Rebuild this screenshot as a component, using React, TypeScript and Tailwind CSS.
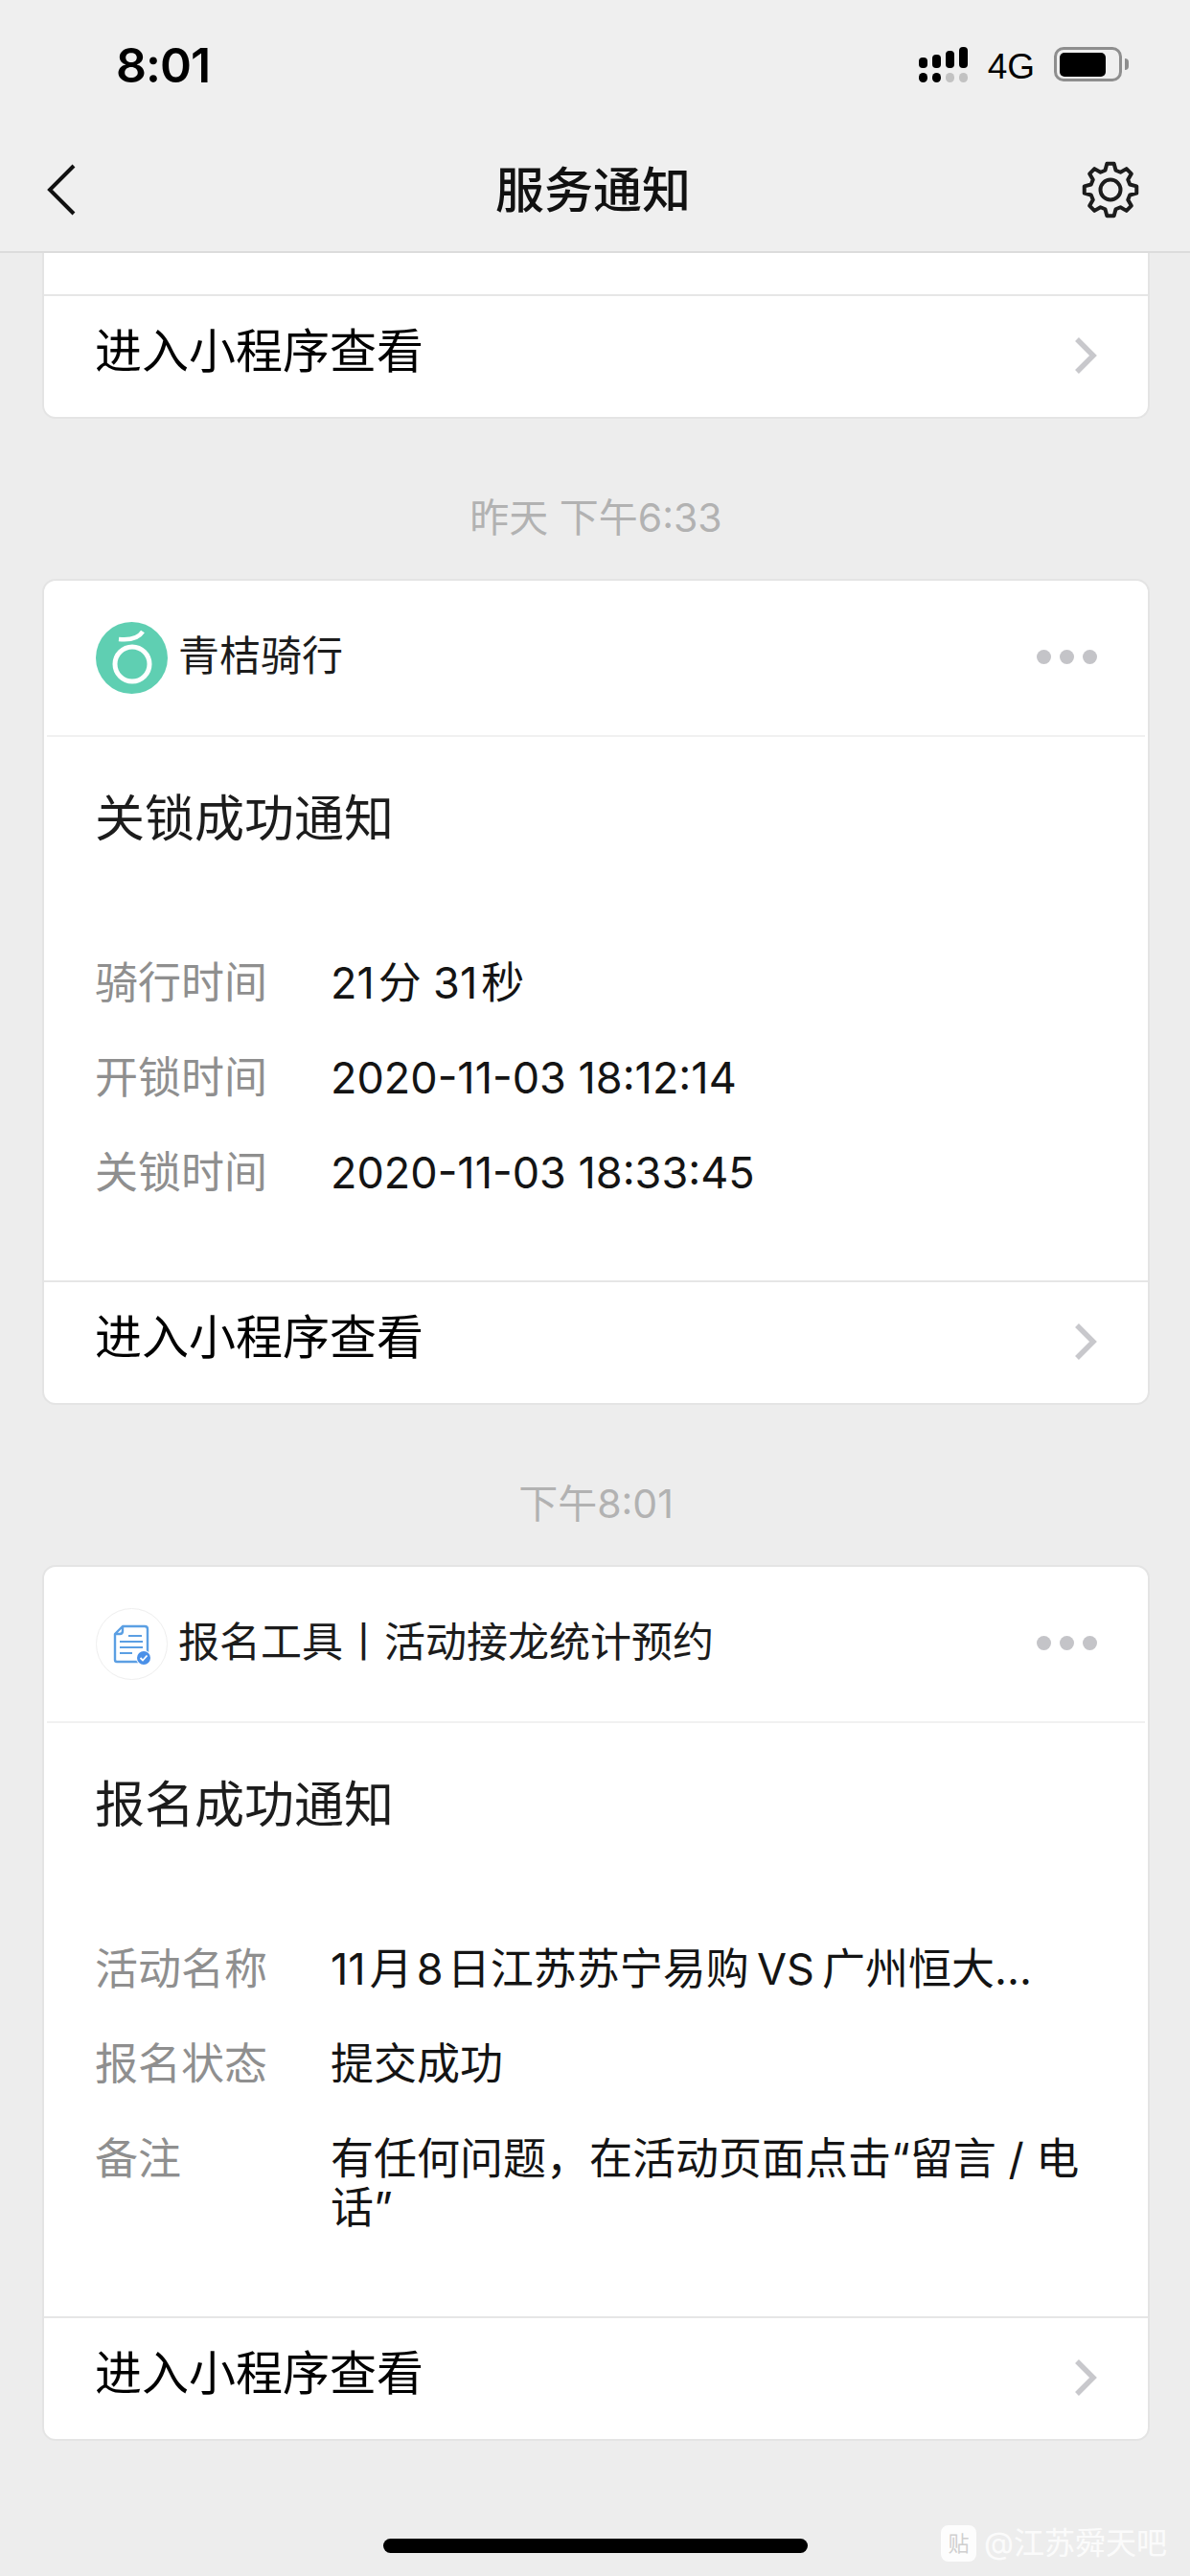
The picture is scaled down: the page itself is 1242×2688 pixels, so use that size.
import React from 'react';

const FONT = "font-['Inter','Noto_Sans_CJK_SC',sans-serif]";

// 8 tooth cog, same outline as the nav bar icon
const gearPath = (() => {
  const cx = 30;
  const cy = 30;
  const teeth = 8;
  const pts: string[] = [];
  for (let i = 0; i < teeth; i++) {
    const a = (i / teeth) * Math.PI * 2 - Math.PI / 2;
    const step = (Math.PI * 2) / teeth;
    const list: [number, number][] = [
      [a - step * 0.34, 21],
      [a - step * 0.17, 27.5],
      [a + step * 0.17, 27.5],
      [a + step * 0.34, 21],
    ];
    list.forEach(([ang, r]) => {
      pts.push(`${(cx + Math.cos(ang) * r).toFixed(2)} ${(cy + Math.sin(ang) * r).toFixed(2)}`);
    });
  }
  return `M${pts.join('L')}Z`;
})();

const GearIcon = () => (
  <svg width="60" height="60" viewBox="0 0 60 60" fill="none" stroke="#1c1c1c" strokeWidth="4" strokeLinejoin="round">
    <path d={gearPath} />
    <circle cx="30" cy="30" r="10.5" />
  </svg>
);

const SignalIcon = () => (
  <div className="flex gap-[5px]">
    {[
      { h: 'h-[11px]', dot: 'bg-black' },
      { h: 'h-[14px]', dot: 'bg-black' },
      { h: 'h-[18px]', dot: 'bg-[#c2c2c2]' },
      { h: 'h-[22px]', dot: 'bg-[#c2c2c2]' },
    ].map((c, i) => (
      <div key={i} className="flex w-[9px] flex-col items-center justify-end gap-[5px] h-[37px]">
        <div className={`w-[9px] rounded-[4px] bg-black ${c.h}`} />
        <div className={`h-[10px] w-[9px] rounded-full ${c.dot}`} />
      </div>
    ))}
  </div>
);

const BatteryIcon = () => (
  <div className="flex items-center gap-[3px]">
    <div className="flex h-[36px] w-[71px] items-center rounded-[10px] border-[3px] border-[#8e8e8e] pl-[3px]">
      <div className="h-[25px] w-[48px] rounded-[5px] bg-black" />
    </div>
    <div className="h-[12px] w-[4px] rounded-r-full bg-[#8e8e8e]" />
  </div>
);

const Chevron = () => (
  <svg width="26" height="38" viewBox="0 0 26 38" fill="none" stroke="#c8c8cc" strokeWidth="5.5">
    <path d="M4 2 L21 19 L4 36" />
  </svg>
);

const QingjuLogo = () => (
  <svg width="75" height="75" viewBox="0 0 75 75" className="shrink-0">
    <circle cx="37.5" cy="37.5" r="37.5" fill="#5fcfb2" />
    <circle cx="38" cy="44" r="18" fill="none" stroke="#fff" strokeWidth="5" />
    <path d="M24 18 C34 19 44 18 49 10" fill="none" stroke="#fff" strokeWidth="4.5" />
  </svg>
);

const FormLogo = () => (
  <svg width="75" height="75" viewBox="0 0 75 75" className="shrink-0">
    <circle cx="37.5" cy="37.5" r="37" fill="#fff" stroke="#eeeeee" />
    <path
      d="M28 19 H51 Q54 19 54 22 V54 Q54 56 52 56 H22 Q20 56 20 54 V27 Z M28 19 V24 Q28 27 25 27 H20"
      fill="none"
      stroke="#5b9fe3"
      strokeWidth="2.4"
      strokeLinejoin="round"
    />
    <path d="M34 29 H48 M25 35 H49 M25 41 H49 M25 47 H38" stroke="#5b9fe3" strokeWidth="2" />
    <circle cx="50" cy="52" r="8" fill="#fff" />
    <circle cx="50" cy="52" r="7" fill="#4a90e8" />
    <path d="M46.5 52 L49 54.5 L53.5 49.5" fill="none" stroke="#fff" strokeWidth="1.8" />
  </svg>
);

const OpenRow = () => (
  <div className="flex h-[128px] items-center justify-between border-t-2 border-[#e6e6e6] pb-[10px] pl-[53px] pr-[52px]">
    <span className="text-[49px] leading-[60px] text-black">进入小程序查看</span>
    <div className="mt-[7px]">
      <Chevron />
    </div>
  </div>
);

const Stamp = ({ text }: { text: string }) => (
  <div className="h-[167px] pt-[81px] text-center text-[41px] leading-[44px] text-[#b2b2b2]">{text}</div>
);

interface Field {
  label: string;
  value: string;
}

const Notice = ({ logo, name, title, fields, pb }: { logo: React.ReactNode; name: string; title: string; fields: Field[]; pb: string }) => (
  <div className="rounded-[14px] border-2 border-[#e4e4e4] bg-white">
    <div className="mx-[3px] flex h-[163px] items-center border-b-2 border-[#f1f1f1] pl-[51px] pr-[50px]">
      {logo}
      <span className="mb-[5px] ml-[11px] text-[43px] leading-[52px] text-[#1c1c1c]">{name}</span>
      <div className="mb-[2px] ml-auto flex gap-[9px]">
        <div className="size-[15px] rounded-full bg-[#c4c4c8]" />
        <div className="size-[15px] rounded-full bg-[#c4c4c8]" />
        <div className="size-[15px] rounded-full bg-[#c4c4c8]" />
      </div>
    </div>
    <div className={`pl-[53px] pr-[64px] pt-[56px] ${pb}`}>
      <div className="text-[52px] leading-[60px] text-[#1c1c1c]">{title}</div>
      <div className="mt-[115px] flex flex-col gap-[48px]">
        {fields.map((f) => (
          <div key={f.label} className="flex text-[45px] leading-[51px]">
            <span className="w-[246px] shrink-0 text-[#8f8f8f]">{f.label}</span>
            <span className="text-[#141414]">{f.value}</span>
          </div>
        ))}
      </div>
    </div>
    <OpenRow />
  </div>
);

export default function App() {
  return (
    <div className={`flex h-[2688px] w-[1242px] flex-col overflow-hidden bg-[#ededed] ${FONT}`}>
      {/* Status + nav bar */}
      <div className="h-[264px] shrink-0 border-b-2 border-[#dcdcdc] bg-[#efefef]">
        <div className="flex h-[135px] items-start pl-[121px] pr-[64px] pt-[37px]">
          <span className="text-[50px] font-semibold leading-[62px] tracking-[-1px] text-black">8:01</span>
          <div className="ml-auto flex items-center pt-[9px]">
            <SignalIcon />
            <span className="ml-[21px] mt-[5px] font-['Liberation_Sans',sans-serif] text-[37px] leading-[37px] text-black">4G</span>
            <div className="ml-[20px]">
              <BatteryIcon />
            </div>
          </div>
        </div>
        <div className="grid h-[127px] grid-cols-[1fr_auto_1fr] items-start pl-[49px] pr-[53px]">
          <svg width="36" height="54" viewBox="0 0 36 54" fill="none" stroke="#111" strokeWidth="4" className="mt-[36px]">
            <path d="M28 2 L3 27 L28 52" />
          </svg>
          <span className="mt-[34px] text-[51px] font-medium leading-[60px] text-[#111]">服务通知</span>
          <div className="mt-[33px] justify-self-end">
            <GearIcon />
          </div>
        </div>
      </div>

      {/* Message list */}
      <div className="flex-1 pl-[44px] pr-[42px]">
        <div className="rounded-b-[14px] border-x-2 border-b-2 border-[#e4e4e4] bg-white pt-[43px]">
          <OpenRow />
        </div>
        <Stamp text="昨天 下午6:33" />
        <Notice
          logo={<QingjuLogo />}
          name="青桔骑行"
          title="关锁成功通知"
          pb="pb-[87px]"
          fields={[
            { label: '骑行时间', value: '21\u200a分\u2009\u200a31\u200a秒' },
            { label: '开锁时间', value: '2020-11-03 18:12:14' },
            { label: '关锁时间', value: '2020-11-03 18:33:45' },
          ]}
        />
        <Stamp text="下午8:01" />
        <Notice
          logo={<FormLogo />}
          name="报名工具丨活动接龙统计预约"
          title="报名成功通知"
          pb="pb-[88px]"
          fields={[
            { label: '活动名称', value: '11\u200a月\u200a8\u200a日江苏苏宁易购\u2009VS\u2009广州恒大...' },
            { label: '报名状态', value: '提交成功' },
            { label: '备注', value: '有任何问题，在活动页面点击“留言 / 电话”' },
          ]}
        />
      </div>

      {/* Home indicator + watermark */}
      <div className="relative h-[141px] shrink-0">
        <div className="mx-auto mt-[102px] h-[15px] w-[443px] rounded-full bg-black" />
        <div className="absolute left-[982px] top-[88px] flex items-center gap-[8px]">
          <div className="flex h-[38px] w-[37px] items-center justify-center rounded-[8px] bg-white/90 text-[22px] leading-none text-[#cfcfcf]">贴</div>
          <span className="text-[32px] leading-[38px] text-white/80">@江苏舜天吧</span>
        </div>
      </div>
    </div>
  );
}
